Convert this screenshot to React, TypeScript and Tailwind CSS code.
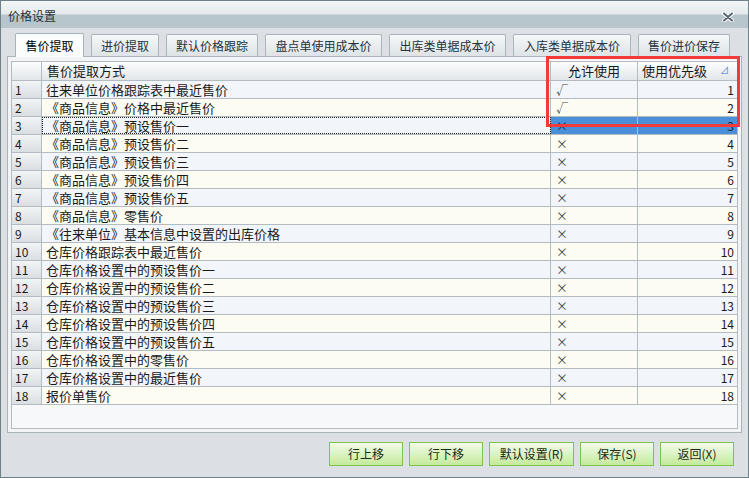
import React from 'react'

const FONT = { fontFamily: '"Noto Sans CJK SC", "Noto Sans", sans-serif' }

const tabs = ['售价提取', '进价提取', '默认价格跟踪', '盘点单使用成本价', '出库类单据成本价', '入库类单据成本价', '售价进价保存']
const tabW = [69, 68, 92, 117, 117, 118, 92]

const names = [
  '往来单位价格跟踪表中最近售价',
  '《商品信息》价格中最近售价',
  '《商品信息》预设售价一',
  '《商品信息》预设售价二',
  '《商品信息》预设售价三',
  '《商品信息》预设售价四',
  '《商品信息》预设售价五',
  '《商品信息》零售价',
  '《往来单位》基本信息中设置的出库价格',
  '仓库价格跟踪表中最近售价',
  '仓库价格设置中的预设售价一',
  '仓库价格设置中的预设售价二',
  '仓库价格设置中的预设售价三',
  '仓库价格设置中的预设售价四',
  '仓库价格设置中的预设售价五',
  '仓库价格设置中的零售价',
  '仓库价格设置中的最近售价',
  '报价单售价',
]

const buttons = [
  { label: '行上移', w: 74 },
  { label: '行下移', w: 74 },
  { label: '默认设置(R)', w: 85 },
  { label: '保存(S)', w: 74 },
  { label: '返回(X)', w: 74 },
]

const COLS = 'grid grid-cols-[30px_509px_87px_99px]'

export default function App() {
  return (
    <div style={FONT} className="w-[749px] h-[478px] bg-[#dcdfe3] border border-[#6d8189] flex flex-col relative overflow-hidden text-[#1a1a1a]">
      {/* title bar */}
      <div className="h-[27px] shrink-0 relative bg-[linear-gradient(#f3f6f7_0px,#e4eaec_13px,#b7c6cc_14px,#b7c6cc_27px)]">
        <span className="absolute left-[7px] top-[7px] text-[12px] leading-[16px] text-[#2a2f33]">价格设置</span>
        <svg className="absolute left-[721px] top-[11px]" width="12" height="10" viewBox="0 0 12 10">
          <path d="M2 1.5 L10 8.5 M10 1.5 L2 8.5" stroke="#ffffff" strokeWidth="4" strokeLinecap="round" />
          <path d="M2 1.5 L10 8.5 M10 1.5 L2 8.5" stroke="#58646b" strokeWidth="2" strokeLinecap="round" />
        </svg>
      </div>

      {/* tabs */}
      <div className="flex items-end pl-[14px] h-[28px] shrink-0 gap-[7px]">
        {tabs.map((t, i) =>
          i === 0 ? (
            <div key={t} style={{ width: tabW[i] }} className="h-[24px] -mb-[1px] z-10 bg-[#fbfcfc] border border-b-0 border-[#a7b2b9] rounded-t-[2px] flex items-center justify-center text-[12px] text-black">
              {t}
            </div>
          ) : (
            <div key={t} style={{ width: tabW[i] }} className="h-[22px] bg-[linear-gradient(#f6f8f9,#dde3e6)] border border-[#aab4bb] border-b-0 rounded-t-[2px] flex items-center justify-center text-[12px] text-[#26343d]">
              {t}
            </div>
          )
        )}
      </div>

      {/* panel */}
      <div className="mx-[6px] h-[377px] border border-[#a9b4bb] bg-[#f2f4f6] pt-[4px] px-[3px] shrink-0">
        <div className="w-[727px] h-[368px] border border-[#b3bcc3] bg-[#f7f8fa]">
          {/* header */}
          <div className={`${COLS} h-[19px] bg-[linear-gradient(#fdfefe,#e1e6e9)] border-b border-[#b3bcc3] text-[13px] leading-[18px]`}>
            <div className="border-r border-[#b3bcc3]" />
            <div className="border-r border-[#b3bcc3] pl-[5px]">售价提取方式</div>
            <div className="border-r border-[#b3bcc3] text-center">允许使用</div>
            <div className="pl-[4px] relative">
              使用优先级
              <span className="absolute right-[8px] top-[4px] text-[9px] leading-[10px] text-[#4d79d0]">⊿</span>
            </div>
          </div>
          {names.map((n, i) => {
            const odd = i % 2 === 0
            const bg = odd ? 'bg-[#f2f5fa]' : 'bg-[#fcfcf3]'
            const sel = i === 2
            const allowed = i < 2
            return (
              <div key={i} className={`${COLS} h-[18px] border-b border-[#b3bcc3] text-[13px] leading-[17px]`}>
                <div className="border-r border-[#b3bcc3] bg-[linear-gradient(#f3f5f6,#d9dee1)] pl-[3px] text-[12px]">{i + 1}</div>
                <div className={`border-r border-[#b3bcc3] pl-[4px] whitespace-nowrap ${bg} ${sel ? 'outline-1 outline-dotted outline-[#222] -outline-offset-1' : ''}`}>{n}</div>
                <div className={`border-r border-[#b3bcc3] pl-[5px] text-[12px] ${sel ? 'bg-[#4a8fd8] text-[#1a2a3a]' : `${bg} text-[#444]`}`}>
                  {allowed ? '√' : '×'}
                </div>
                <div className={`text-right pr-[3px] text-[12px] ${sel ? 'bg-[#4a8fd8] text-[#1a2a3a]' : bg}`}>{i + 1}</div>
              </div>
            )
          })}
        </div>
      </div>

      {/* buttons */}
      <div className="flex justify-end gap-[6px] pr-[14px] mt-[9px]">
        {buttons.map((b) => (
          <button key={b.label} style={{ width: b.w }} className="h-[24px] border border-[#7cc34f] bg-[linear-gradient(#f3fbea,#c3ea9a)] text-[12px] text-[#1f2a1a] flex items-center justify-center">
            {b.label}
          </button>
        ))}
      </div>

      {/* red highlight box */}
      <div className="absolute left-[545px] top-[55px] w-[194px] h-[71px] border-[3px] border-[#f23a3a] pointer-events-none" />
    </div>
  )
}
